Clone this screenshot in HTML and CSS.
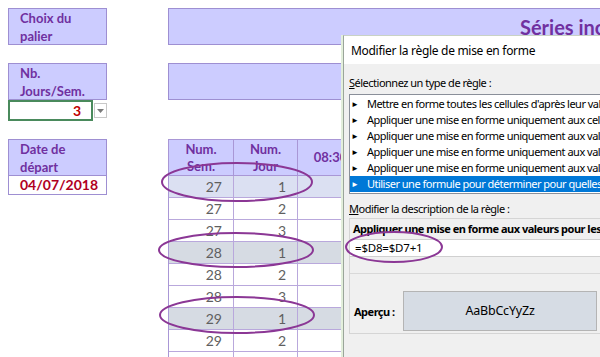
FILE: index.html
```html
<!DOCTYPE html>
<html lang="fr">
<head>
<meta charset="utf-8">
<title>Séries incrémentées</title>
<link rel="stylesheet" href="styles.css">
</head>
<body>
<div class="sheet">
  <div class="lab">Choix du<br>palier</div>
  <div class="band band-title"><span class="title">Séries incrémentées</span></div>

  <div class="left2">
    <div class="lab">Nb.<br>Jours/Sem.</div>
    <div class="inputrow">
      <div class="cell-input">3</div>
      <div class="dd"><svg width="7" height="4" viewBox="0 0 7 4"><path d="M0 0h7L3.5 4z" fill="#7a7a7a"/></svg></div>
    </div>
  </div>
  <div class="band band2"></div>

  <div class="left3">
    <div class="lab">Date de<br>départ</div>
    <div class="date">04/07/2018</div>
  </div>
  <div class="grid">
    <div class="th">Num.<br>Sem.</div>
    <div class="th">Num.<br>Jour</div>
    <div class="th th-time">08:30</div>

    <div class="td hl1">27</div><div class="td hl1">1</div><div class="td hl1"></div>
    <div class="td">27</div><div class="td">2</div><div class="td"></div>
    <div class="td">27</div><div class="td">3</div><div class="td"></div>
    <div class="td hl">28</div><div class="td hl">1</div><div class="td hl"></div>
    <div class="td">28</div><div class="td">2</div><div class="td"></div>
    <div class="td">28</div><div class="td">3</div><div class="td"></div>
    <div class="td hl">29</div><div class="td hl">1</div><div class="td hl"></div>
    <div class="td">29</div><div class="td">2</div><div class="td"></div>
    <div class="td">29</div><div class="td">3</div><div class="td"></div>
  </div>
</div>

<div class="dialog">
  <div class="dlg-title">Modifier la règle de mise en forme</div>
  <div class="dlg-body">
    <div class="dlg-label"><u>S</u>électionnez un type de règle :</div>
    <div class="list">
      <div class="item"><span class="arr">►</span>Mettre en forme toutes les cellules d'après leur valeur</div>
      <div class="item"><span class="arr">►</span>Appliquer une mise en forme uniquement aux cellules qui contiennent</div>
      <div class="item"><span class="arr">►</span>Appliquer une mise en forme uniquement aux valeurs rangées parmi les premières</div>
      <div class="item"><span class="arr">►</span>Appliquer une mise en forme uniquement aux valeurs au-dessus ou en dessous</div>
      <div class="item"><span class="arr">►</span>Appliquer une mise en forme uniquement aux valeurs uniques ou aux doublons</div>
      <div class="item sel"><span class="arr">►</span>Utiliser une formule pour déterminer pour quelles cellules le format sera appliqué</div>
    </div>
    <div class="dlg-label lab2"><u>M</u>odifier la description de la règle :</div>
    <div class="group">
      <div class="grp-head">Appliquer une mise en forme aux valeurs pour lesquelles cette formule est vraie :</div>
      <div class="formula">=$D8=$D7+1</div>
      <div class="preview-row">
        <span class="prev-lab">Aperçu :</span>
        <div class="preview">AaBbCcYyZz</div>
      </div>
    </div>
  </div>
</div>

<svg class="marks" width="600" height="357" viewBox="0 0 600 357">
  <ellipse cx="237" cy="182" rx="75" ry="19"/>
  <ellipse cx="236" cy="250" rx="77" ry="17"/>
  <ellipse cx="237" cy="315" rx="77" ry="18"/>
  <ellipse cx="394" cy="247" rx="48" ry="15"/>
</svg>
</body>
</html>
```
FILE: styles.css
```css
html, body {
  margin: 0;
  padding: 0;
  width: 600px;
  height: 357px;
  overflow: hidden;
  background: #fff;
  font-family: Lato, "Liberation Sans", sans-serif;
}
body { position: relative; }

.sheet {
  display: grid;
  grid-template-columns: 99px 1fr;
  grid-template-rows: 37px 58px auto;
  column-gap: 61px;
  row-gap: 18px;
  padding: 8px 0 0 8px;
}

.lab {
  box-sizing: border-box;
  height: 37px;
  background: #ccccff;
  border: 1px solid #9e8fd2;
  color: #7030a0;
  font-weight: 700;
  font-size: 13px;
  line-height: 18px;
  padding: 0 0 0 11px;
}

.band {
  box-sizing: border-box;
  height: 37px;
  width: 520px;
  background: #ccccff;
  border: 1px solid #9e8fd2;
}
.band-title {
  white-space: nowrap;
  overflow: hidden;
  padding-left: 351px;
}
.title {
  color: #7030a0;
  font-weight: 700;
  font-size: 20px;
  line-height: 37px;
}

.inputrow { display: flex; align-items: center; }
.cell-input {
  box-sizing: border-box;
  width: 100px;
  height: 21px;
  border: 2px solid #4a8a5c;
  color: #c00000;
  font-weight: 700;
  font-size: 14px;
  line-height: 17px;
  text-align: right;
  padding-right: 10px;
}
.dd {
  box-sizing: border-box;
  width: 15px;
  height: 15px;
  margin-left: 1px;
  border: 1px solid #c8c8c8;
  background: #fff;
  display: flex;
  align-items: center;
  justify-content: center;
}

.date {
  box-sizing: border-box;
  height: 19px;
  border: 1px solid #9e8fd2;
  border-top: none;
  color: #b0001e;
  font-weight: 700;
  font-size: 14px;
  line-height: 18px;
  padding-left: 11px;
}

.grid {
  display: grid;
  grid-template-columns: 65px 64px 66px;
  grid-auto-rows: 22px;
  grid-template-rows: 37px;
  border-left: 1px solid #a997d6;
  width: 195px;
}
.th {
  box-sizing: border-box;
  background: #ccccff;
  border-right: 1px solid #a997d6;
  border-bottom: 1px solid #a997d6;
  border-top: 1px solid #a997d6;
  color: #7030a0;
  font-weight: 700;
  font-size: 13px;
  line-height: 17px;
  text-align: center;
  padding-top: 1px;
}
.th-time { line-height: 34px; padding-top: 0; }
.td {
  box-sizing: border-box;
  border-right: 1px solid #b9a8dc;
  border-bottom: 1px solid #b9a8dc;
  color: #5f5f5f;
  font-size: 14px;
  line-height: 21px;
  text-align: right;
  padding-right: 11px;
}
.hl1 { background: #dbe0f2; }
.hl { background: #d6dbe3; }

.dialog {
  position: absolute;
  left: 343px;
  top: 35px;
  width: 280px;
  height: 340px;
  background: #f0f0f0;
  border-left: 1px solid #9aa59a;
  border-top: 1px solid #c9d2c4;
  box-shadow: -2px 0 0 #e3efdc;
  font-family: "Noto Sans", "Open Sans", sans-serif;
  font-size: 11px;
  letter-spacing: -0.5px;
  color: #000;
  white-space: nowrap;
  overflow: hidden;
}
.dlg-title {
  background: #fff;
  height: 28px;
  line-height: 30px;
  padding-left: 7px;
  font-size: 12px;
  letter-spacing: -0.3px;
}
.dlg-body { padding: 11px 0 0 5px; }
.dlg-label { line-height: 16px; height: 16px; }
.list {
  margin-top: 3px;
  box-sizing: border-box;
  height: 100px;
  background: #fff;
  border: 1px solid #8a8f99;
  padding: 1px 0;
}
.item {
  height: 16px;
  line-height: 16px;
  padding-left: 1px;
}
.arr { font-size: 8px; margin-right: 8px; vertical-align: 1px; letter-spacing: 0; }
.sel { background: #0078d7; color: #fff; }
.lab2 { margin-top: 7px; }
.group {
  box-sizing: border-box;
  margin-top: 1px;
  height: 116px;
  border: 1px solid #d5d5d5;
  border-right: none;
}
.grp-head {
  font-weight: 700;
  height: 20px;
  line-height: 20px;
  padding-left: 3px;
}
.formula {
  background: #fff;
  height: 16px;
  line-height: 16px;
  border-top: 1px solid #d0d0d0;
  border-bottom: 1px solid #d0d0d0;
  padding-left: 5px;
  font-size: 11.5px;
  letter-spacing: -0.2px;
}
.preview-row {
  margin-top: 16px;
  border-top: 1px solid #d9d9d9;
  padding: 17px 0 0 4px;
  display: flex;
  align-items: center;
}
.prev-lab { font-weight: 700; width: 49px; }
.preview {
  box-sizing: border-box;
  width: 194px;
  height: 40px;
  background: #d6dce4;
  border: 1px solid #b4b4b4;
  text-align: center;
  line-height: 38px;
  font-size: 12.5px;
  letter-spacing: -0.2px;
}

.marks {
  position: absolute;
  left: 0;
  top: 0;
  pointer-events: none;
}
.marks ellipse {
  fill: none;
  stroke: #8b3795;
  stroke-width: 2;
}
```
